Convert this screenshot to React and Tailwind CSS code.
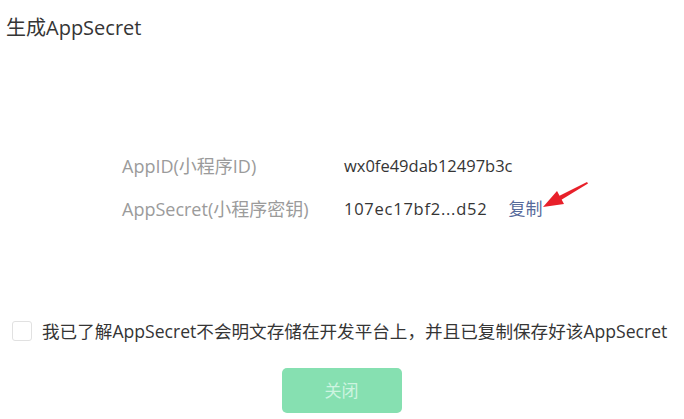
export default function App() {
  return (
    <div className="relative w-[684px] h-[419px] bg-white overflow-hidden font-['Open_Sans','Noto_Sans_CJK_SC',sans-serif]">
      <div className="pt-[14px] pl-[6px] text-[20px] leading-[28px] text-[#353535]">生成AppSecret</div>

      <div className="mt-[112px] flex flex-col gap-[19px] leading-[24px]">
        <div className="flex">
          <div className="w-[344px] pl-[122px] text-[18px] text-[#9b9b9b]">AppID(小程序ID)</div>
          <div className="text-[16.5px] text-[#353535]">wx0fe49dab12497b3c</div>
        </div>
        <div className="flex">
          <div className="w-[344px] pl-[122px] text-[18px] text-[#9b9b9b]">AppSecret(小程序密钥)</div>
          <div className="text-[16.5px] text-[#353535] tracking-[0.75px]">107ec17bf2...d52</div>
          <div className="ml-[21px] text-[17px] text-[#576b9b]">复制</div>
        </div>
      </div>

      <div className="mt-[98px] flex items-center pl-[12px] h-[24px]">
        <div className="w-[20px] h-[20px] border border-[#e1e1e1] rounded-[3px] bg-white" />
        <div className="ml-[10px] text-[17.6px] leading-[24px] text-[#353535]">我已了解AppSecret不会明文存储在开发平台上，并且已复制保存好该AppSecret</div>
      </div>

      <div className="mt-[25px] flex justify-center">
        <button className="w-[120px] h-[45px] rounded-[5px] bg-[#86e0b1] text-[#cdf4e0] text-[17px] ml-[-1px]">关闭</button>
      </div>

      <svg className="absolute left-0 top-0 pointer-events-none" width="684" height="419">
        <polygon points="543,207 557,191 564,204" fill="#e8202a" />
        <polygon points="559,196 561,200 588,183.5 587,182" fill="#e8202a" />
      </svg>
    </div>
  );
}
